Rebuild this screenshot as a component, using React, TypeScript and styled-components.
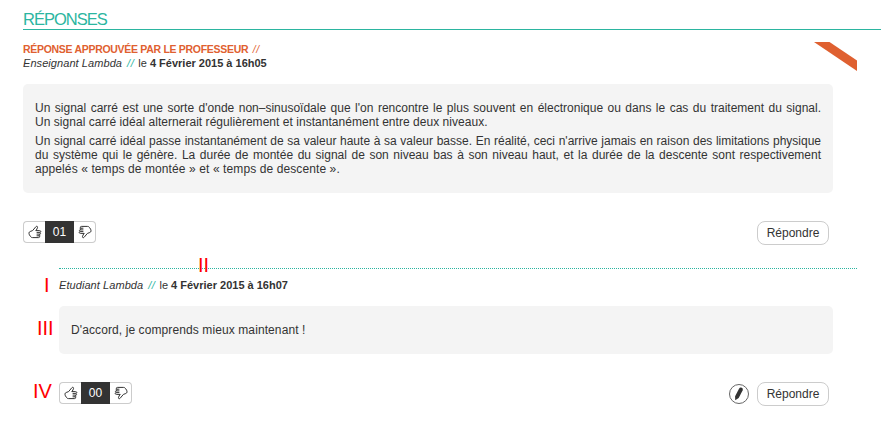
import React from "react";
import styled, { createGlobalStyle } from "styled-components";

const TEAL = "#2bb5a0";
const ORANGE = "#df6030";
const INK = "#333";

const Global = createGlobalStyle`
  *, *::before, *::after { box-sizing: border-box; }
  body {
    margin: 0;
    background: #fff;
    color: ${INK};
    font-family: "Liberation Sans", Arial, sans-serif;
    font-size: 12px;
    line-height: 14px;
  }
`;

const Page = styled.main`
  width: 894px;
  height: 426px;
  padding: 8px 13px 0 23px;
  overflow: hidden;
`;

const Title = styled.h1`
  margin: 0;
  height: 22px;
  border-bottom: 1px solid ${TEAL};
  color: ${TEAL};
  font-size: 16.5px;
  font-weight: 400;
  line-height: 23px;
  letter-spacing: -1px;
`;

const Answer = styled.article`
  position: relative;
  width: 834px;
  padding-top: 12px;
`;

const Ribbon = styled.svg`
  position: absolute;
  top: 12px;
  right: 0;
`;

const Approved = styled.div`
  color: ${ORANGE};
  height: 14px;
  font-size: 10.5px;
  font-weight: 700;
  letter-spacing: -0.3px;
`;

const Meta = styled.div`
  font-size: 11px;
  white-space: pre;
`;

const Author = styled.em`
  letter-spacing: 0.07px;
`;

const Slashes = styled.i<{ $color: string }>`
  color: ${(p) => p.$color};
  font-weight: 400;
  letter-spacing: 0.5px;
  margin: 0 1px 0 2px;
`;

const Bubble = styled.div<{ $height: number }>`
  width: calc(100% - 24px);
  height: ${(p) => p.$height}px;
  margin-top: 14px;
  padding: 17px 12px;
  border-radius: 5px;
  background: #f4f4f4;
`;

const Paragraph = styled.p`
  margin: 0 0 5px;
`;

const Line = styled.span<{ $spacing?: number; $justify?: boolean }>`
  display: block;
  white-space: nowrap;
  letter-spacing: ${(p) => p.$spacing ?? 0}px;
  text-align-last: ${(p) => (p.$justify ? "justify" : "left")};
`;

const Actions = styled.div`
  display: flex;
  align-items: flex-start;
  justify-content: space-between;
  width: calc(100% - 28px);
  margin-top: 28px;
`;

const Votes = styled.div`
  display: flex;
  height: 22px;
  width: 73px;
`;

const VoteButton = styled.button<{ $side: "left" | "right" }>`
  display: grid;
  place-items: center;
  width: 22px;
  padding: 0;
  border: 1px solid #ccc;
  background: #fff;
  color: ${INK};
  border-radius: ${(p) => (p.$side === "left" ? "4px 0 0 4px" : "0 4px 4px 0")};
  border-${(p) => (p.$side === "left" ? "right" : "left")}: 0;
`;

const Count = styled.span`
  width: 29px;
  background: ${INK};
  color: #fff;
  text-align: center;
  line-height: 22px;
`;

const Buttons = styled.div`
  display: flex;
  gap: 8px;
  align-items: center;
`;

const Reply = styled.button`
  width: 72px;
  height: 24px;
  padding: 0;
  border: 1px solid #ccc;
  border-radius: 8px;
  background: #fff;
  color: ${INK};
  font: 12px/22px "Liberation Sans", Arial, sans-serif;
`;

const Edit = styled.button`
  display: grid;
  place-items: center;
  width: 20px;
  height: 20px;
  padding: 0;
  border: 1px solid #666;
  border-radius: 50%;
  background: #fff;
`;

const Nested = styled.section`
  position: relative;
  width: 798px;
  margin: 23px 0 0 36px;
  border-top: 1px dotted ${TEAL};
  padding-top: 9px;
`;

const Marker = styled.span<{ $x: number; $y: number }>`
  position: absolute;
  left: ${(p) => p.$x}px;
  top: ${(p) => p.$y}px;
  color: #f00;
  font-size: 20px;
  line-height: 20px;
`;

const Hand = ({ down = false }: { down?: boolean }) => (
  <svg width="14" height="14" viewBox="0 0 14 14" fill="none" stroke="currentColor" strokeWidth="1" strokeLinejoin="round" strokeLinecap="round">
    <g transform={down ? "rotate(180 7 7)" : undefined}>
      <path d="M8.1 5.6 9.5 2.7C9.9 1.4 8.8.8 7.9 1.7L4.6 5.6 2.2 6.5C.8 7 .7 8.4 1.4 9.8L2.5 11.5Q3.2 12.6 4.6 12.6H10.5C12.1 12.6 12.1 10.9 11 10.8M8.1 5.6H11.5C13.2 5.6 13.2 7.3 11.7 7.4H9M11.9 7.4C13 7.7 12.8 9.1 11.6 9.1H9M11.5 9.2C12.5 9.5 12.2 10.8 11.1 10.8H9" />
    </g>
  </svg>
);

const VoteBox = ({ value }: { value: string }) => (
  <Votes>
    <VoteButton $side="left" aria-label="Pour"><Hand /></VoteButton>
    <Count>{value}</Count>
    <VoteButton $side="right" aria-label="Contre"><Hand down /></VoteButton>
  </Votes>
);

export default function App() {
  return (
    <>
      <Global />
      <Page>
        <Title>RÉPONSES</Title>
        <Answer>
          <Ribbon width="43" height="29" viewBox="0 0 43 29">
            <path d="M0 0H15.5L43 18.5V29Z" fill={ORANGE} />
          </Ribbon>
          <Approved>RÉPONSE APPROUVÉE PAR LE PROFESSEUR <Slashes $color={ORANGE}>//</Slashes></Approved>
          <Meta><Author>Enseignant Lambda</Author> <Slashes $color={TEAL}>//</Slashes> le <b>4 Février 2015 à 16h05</b></Meta>
          <Bubble $height={109}>
            <Paragraph>
              <Line $justify>Un signal carré est une sorte d'onde non–sinusoïdale que l'on rencontre le plus souvent en électronique ou dans le cas du traitement du signal.</Line>
              <Line $spacing={0.035}>Un signal carré idéal alternerait régulièrement et instantanément entre deux niveaux.</Line>
            </Paragraph>
            <Paragraph>
              <Line $justify>Un signal carré idéal passe instantanément de sa valeur haute à sa valeur basse. En réalité, ceci n'arrive jamais en raison des limitations physique</Line>
              <Line $justify>du système qui le génère. La durée de montée du signal de son niveau bas à son niveau haut, et la durée de la descente sont respectivement</Line>
              <Line $spacing={0.1}>appelés « temps de montée » et « temps de descente ».</Line>
            </Paragraph>
          </Bubble>
          <Actions>
            <VoteBox value="01" />
            <Buttons><Reply>Répondre</Reply></Buttons>
          </Actions>
          <Nested>
            <Marker $x={139} $y={-14}>II</Marker>
            <Marker $x={-15} $y={6}>I</Marker>
            <Marker $x={-22} $y={49}>III</Marker>
            <Marker $x={-26} $y={112}>IV</Marker>
            <Meta><Author>Etudiant Lambda</Author> <Slashes $color={TEAL}>//</Slashes> le <b>4 Février 2015 à 16h07</b></Meta>
            <Bubble $height={48}>
              <Line $spacing={0.1}>D'accord, je comprends mieux maintenant !</Line>
            </Bubble>
            <Actions>
              <VoteBox value="00" />
              <Buttons>
                <Edit aria-label="Modifier">
                  <svg width="10" height="14" viewBox="0 0 10 14">
                    <path d="M5 1.8Q6 .1 7.8.8 9.5 1.6 8.7 3.2L4.7 11 1.2 13.3 1.1 9.2Z" fill={INK} />
                  </svg>
                </Edit>
                <Reply>Répondre</Reply>
              </Buttons>
            </Actions>
          </Nested>
        </Answer>
      </Page>
    </>
  );
}
